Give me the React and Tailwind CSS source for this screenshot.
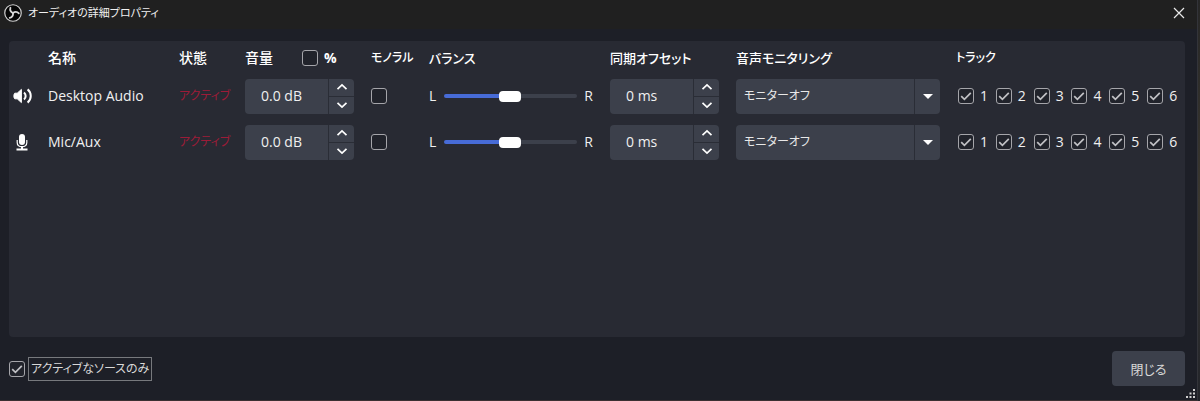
import React from 'react';

const SOURCES = [
  { id: 'desktop', name: 'Desktop Audio', Icon: SpeakerIcon },
  { id: 'mic', name: 'Mic/Aux', Icon: MicIcon },
];

const TRACKS = [1, 2, 3, 4, 5, 6];

function ObsLogo() {
  return (
    <svg viewBox="0 0 24 24" className="h-[18px] w-[18px] shrink-0" aria-hidden="true">
      <circle cx="12" cy="12" r="11" fill="#050505" stroke="#d0d0d0" strokeWidth="1.6" />
      <g fill="none" stroke="#d8d8d8" strokeWidth="2.4" strokeLinecap="round">
        <path d="M12.2 12C9.2 11 7.4 8.4 8.6 5" />
        <path d="M12.2 12C9.2 11 7.4 8.4 8.6 5" transform="rotate(120 12 12)" />
        <path d="M12.2 12C9.2 11 7.4 8.4 8.6 5" transform="rotate(240 12 12)" />
      </g>
    </svg>
  );
}

function SpeakerIcon() {
  return (
    <svg viewBox="0 0 20 16" className="h-4 w-5" fill="none" stroke="#fefefe" strokeWidth="2" aria-hidden="true">
      <path d="M1.8 5.2h2.4L8.4 1.4v13.2l-4.2-3.8H1.8C.6 10 .6 6 1.8 5.2z" fill="#fefefe" strokeWidth="1" strokeLinejoin="round" />
      <path d="M11 4.4c2.2 1.8 2.2 5.4 0 7.2" />
      <path d="M14.6 1.4c4.2 3.4 4.2 9.8 0 13.2" />
    </svg>
  );
}

function MicIcon() {
  return (
    <svg viewBox="0 0 18 18" className="h-[18px] w-[18px]" fill="none" aria-hidden="true">
      <rect x="6" y="1" width="6" height="11" rx="3" fill="#fefefe" />
      <path d="M4.2 7V9.4c0 5.6 9.6 5.6 9.6 0V7" stroke="#fefefe" strokeWidth="1.2" />
      <path d="M9 13v3M3.5 16.4h11" stroke="#fefefe" strokeWidth="2" />
    </svg>
  );
}

function Check({ label, checked = false }) {
  return (
    <span className="relative flex h-4 w-4 shrink-0">
      <input
        type="checkbox"
        aria-label={label}
        defaultChecked={checked}
        className="peer h-4 w-4 appearance-none rounded-[3px] border border-[#a5a5aa] bg-[#21232b]"
      />
      <svg viewBox="0 0 16 16" className="pointer-events-none absolute inset-0 hidden peer-checked:block" fill="none" aria-hidden="true">
        <path d="M3.2 8.2l3.2 3.2L12.8 4.8" stroke="#c0c0c4" strokeWidth="1.7" />
      </svg>
    </span>
  );
}

function SpinBox({ label, value }) {
  return (
    <div className="flex h-[35px] w-[109px] overflow-hidden rounded bg-[#3c404b]">
      <input
        type="text"
        aria-label={label}
        defaultValue={value}
        className="w-[83px] min-w-0 pl-4 text-[14px] text-[#f0f0f0] outline-none"
      />
      <div className="flex flex-1 flex-col border-l border-[#2a2d36]">
        <button type="button" aria-label={`${label} +`} className="flex flex-1 items-center justify-center border-b border-[#2a2d36]">
          <svg viewBox="0 0 12 8" className="h-2 w-3" fill="none" aria-hidden="true">
            <path d="M1.5 6.2L6 2l4.5 4.2" stroke="#fefefe" strokeWidth="1.7" />
          </svg>
        </button>
        <button type="button" aria-label={`${label} -`} className="flex flex-1 items-center justify-center">
          <svg viewBox="0 0 12 8" className="h-2 w-3" fill="none" aria-hidden="true">
            <path d="M1.5 1.8L6 6l4.5-4.2" stroke="#fefefe" strokeWidth="1.7" />
          </svg>
        </button>
      </div>
    </div>
  );
}

function Balance({ label }) {
  return (
    <div className="flex w-[164px] items-center justify-between">
      <span>L</span>
      <input
        type="range"
        aria-label={label}
        defaultValue="50"
        className="h-1 w-[133px] appearance-none rounded-full bg-linear-to-r from-[#476bd7] from-50% to-[#3c404b] to-50% [&::-webkit-slider-thumb]:h-[11px] [&::-webkit-slider-thumb]:w-[22px] [&::-webkit-slider-thumb]:appearance-none [&::-webkit-slider-thumb]:rounded [&::-webkit-slider-thumb]:bg-white"
      />
      <span>R</span>
    </div>
  );
}

function MonitorSelect({ label }) {
  return (
    <div className="relative mr-4 h-[35px]">
      <select
        aria-label={label}
        className="h-full w-full appearance-none rounded bg-[#3c404b] pl-2 text-[12px] text-[#e8e8e8]"
      >
        <option>モニターオフ</option>
      </select>
      <span className="pointer-events-none absolute inset-y-0 right-0 flex w-[26px] items-center justify-center border-l border-[#2a2d36]">
        <svg viewBox="0 0 10 5" className="h-[5px] w-[10px]" aria-hidden="true">
          <path d="M0 0h10L5 5z" fill="#fefefe" />
        </svg>
      </span>
    </div>
  );
}

function SourceRow({ source }) {
  const { Icon, name } = source;
  return (
    <tr className="h-[46px]">
      <td className="pl-1"><Icon /></td>
      <td>{name}</td>
      <td className="text-[12px] text-[#9c1c38]">アクティブ</td>
      <td><SpinBox label={`${name} 音量`} value="0.0 dB" /></td>
      <td><Check label={`${name} モノラル`} /></td>
      <td><Balance label={`${name} バランス`} /></td>
      <td><SpinBox label={`${name} 同期オフセット`} value="0 ms" /></td>
      <td><MonitorSelect label={`${name} 音声モニタリング`} /></td>
      <td className="pl-0.5">
        <div className="flex">
          {TRACKS.map((n) => (
            <label key={n} className="flex w-[38px] items-center gap-1.5">
              <Check label={`${name} トラック ${n}`} checked />
              {n}
            </label>
          ))}
        </div>
      </td>
    </tr>
  );
}

function ResizeGrip() {
  return (
    <svg viewBox="0 0 9 9" className="absolute right-0.5 bottom-0.5 h-[9px] w-[9px]" fill="#d0d0d0" aria-hidden="true">
      <path d="M7 0h2v2H7zM3.5 3.5h2v2h-2zM7 3.5h2v2H7zM0 7h2v2H0zM3.5 7h2v2h-2zM7 7h2v2H7z" />
    </svg>
  );
}

export default function App() {
  return (
    <div className="flex min-h-screen bg-[#1d1f27] font-['Open_Sans','Noto_Sans_CJK_JP',sans-serif] text-[14px] leading-5 text-[#f0f0f0] [font-feature-settings:'palt']">
      <div className="relative flex min-w-0 flex-1 flex-col border-b border-[#3a3032]">
        <header className="flex h-[29px] items-center justify-between bg-[#202020] pr-3 pb-1 pl-1">
          <h1 className="flex items-center gap-1.5 text-[11px] font-normal">
            <ObsLogo />
            オーディオの詳細プロパティ
          </h1>
          <button type="button" aria-label="ウィンドウを閉じる">
            <svg viewBox="0 0 12 12" className="h-3 w-3" aria-hidden="true">
              <path d="M1 1l10 10M11 1L1 11" stroke="#e8e8e8" strokeWidth="1.2" />
            </svg>
          </button>
        </header>

        <main className="mx-[9px] mt-3 mr-3 flex-1 rounded bg-[#282a33]">
          <table className="w-full table-fixed border-collapse text-left">
            <colgroup>
              <col className="w-[39px]" />
              <col className="w-[131px]" />
              <col className="w-[66px]" />
              <col className="w-[126px]" />
              <col className="w-[58px]" />
              <col className="w-[181px]" />
              <col className="w-[126px]" />
              <col />
              <col className="w-[229px]" />
            </colgroup>
            <thead>
              <tr className="h-8 text-[12px] text-white [&>th]:pt-0.5 [&>th]:font-medium">
                <th aria-label="種類" />
                <th className="text-[14px]">名称</th>
                <th className="text-[14px]">状態</th>
                <th className="text-[14px]">
                  <div className="flex items-center">
                    <span className="w-[57px]">音量</span>
                    <label className="flex items-center gap-1.5 font-bold">
                      <Check label="%" />%
                    </label>
                  </div>
                </th>
                <th>モノラル</th>
                <th className="text-[13px]">バランス</th>
                <th className="text-[13px]">同期オフセット</th>
                <th className="text-[13px]">音声モニタリング</th>
                <th>トラック</th>
              </tr>
            </thead>
            <tbody>
              {SOURCES.map((source) => (
                <SourceRow key={source.id} source={source} />
              ))}
            </tbody>
          </table>
        </main>

        <footer className="flex h-[63px] items-center justify-between pr-3 pl-[9px]">
          <label className="flex items-center gap-[3px] text-[12px] text-[#d8d8d8]">
            <Check label="アクティブなソースのみ" checked />
            <span className="border border-[#77797d] px-0.5 py-px">アクティブなソースのみ</span>
          </label>
          <button type="button" className="h-[35px] w-[73px] rounded bg-[#3c404b] text-[13px] text-[#d8d8d8]">
            閉じる
          </button>
        </footer>
        <ResizeGrip />
      </div>
      <div className="w-[3px] border-l border-[#33343a] bg-linear-to-b from-[#262626] via-[#3b3830] to-[#22242a]" />
    </div>
  );
}
